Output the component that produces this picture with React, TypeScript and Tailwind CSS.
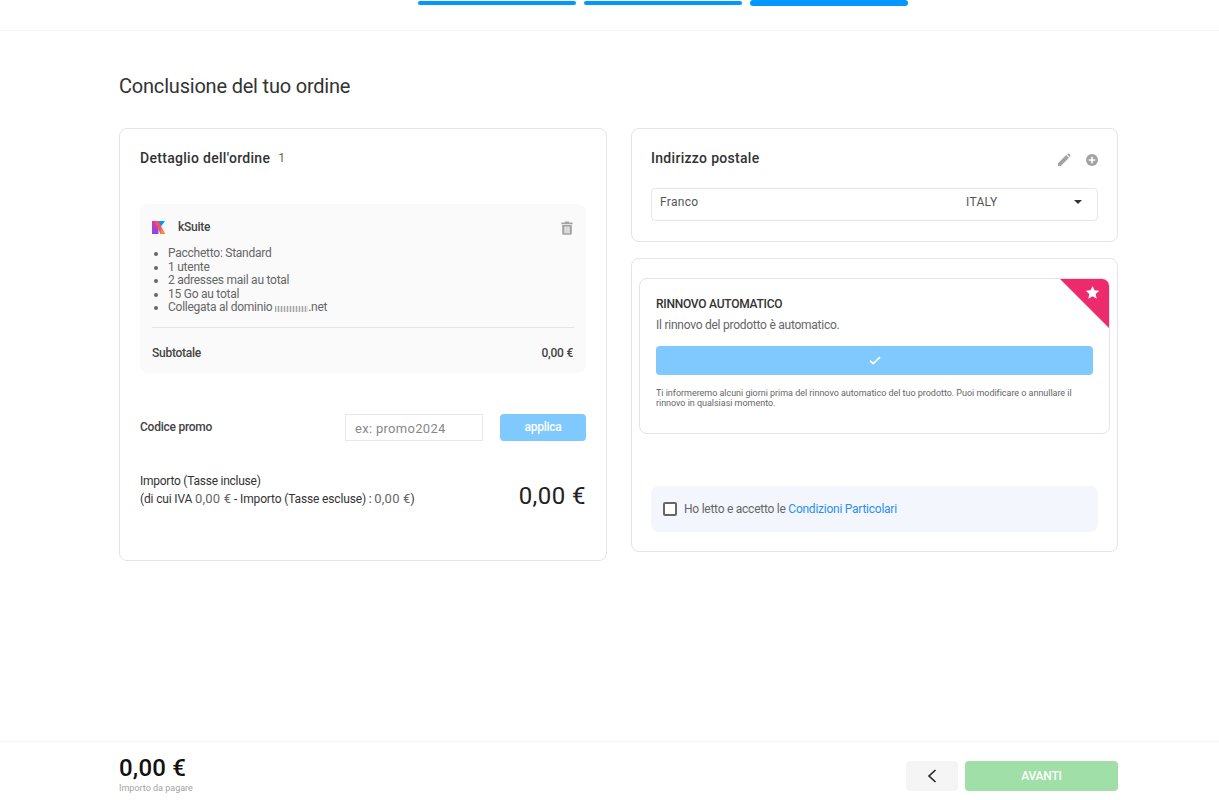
import React from "react";

const font = "font-['Roboto','Liberation_Sans',sans-serif]";

function KLogo() {
  return (
    <svg width="13" height="13" viewBox="0 0 13 13" className="shrink-0">
      <defs>
        <linearGradient id="kl" x1="0" y1="0" x2="0" y2="1">
          <stop offset="0" stopColor="#e0399b" />
          <stop offset="1" stopColor="#7a4cf0" />
        </linearGradient>
      </defs>
      <rect x="0" y="0" width="6.5" height="13" fill="url(#kl)" />
      <path d="M6 0H13L9 5.5 6 3z" fill="#0098ff" />
      <path d="M2.5 0H6.5L13 13H8.5z" fill="#f2555e" />
      <path d="M8.6 6.2L13 13H9z" fill="#fa8a3c" />
    </svg>
  );
}

function Trash() {
  return (
    <svg width="12" height="14" viewBox="0 0 12 14" fill="#a3a3a3">
      <path d="M4 0.5H8V1.6H11.6V3.2H0.4V1.6H4z" />
      <path fillRule="evenodd" d="M1.2 4H10.8V12.6C10.8 13.3 10.3 13.8 9.6 13.8H2.4C1.7 13.8 1.2 13.3 1.2 12.6zM3.5 5.6V12.2H4.7V5.6zM5.4 5.6V12.2H6.6V5.6zM7.3 5.6V12.2H8.5V5.6z" />
    </svg>
  );
}

function Pencil() {
  return (
    <svg width="14" height="14" viewBox="0 0 14 14" fill="#a3a3a3">
      <path d="M1 10.2L9.2 2 12 4.8 3.8 13H1z" />
      <path d="M10 1.2L10.8 0.6C11.2 0.3 11.7 0.3 12 0.6L13.4 2C13.7 2.3 13.7 2.8 13.4 3.2L12.8 4z" />
    </svg>
  );
}

function PlusCircle() {
  return (
    <svg width="12" height="12" viewBox="0 0 12 12">
      <circle cx="6" cy="6" r="6" fill="#a3a3a3" />
      <path d="M6 2.8V9.2M2.8 6H9.2" stroke="#fff" strokeWidth="1.6" />
    </svg>
  );
}

export default function App() {
  return (
    <div className={`${font} h-[800px] w-full bg-white flex flex-col overflow-hidden text-[#333]`}>
      <header className="h-[31px] shrink-0 border-b border-[#f5f5fa] flex justify-center gap-2 items-start pl-[107px]">
        <div className="w-[158px] h-[4px] mt-[1px] rounded-full bg-[#0098ff]" />
        <div className="w-[158px] h-[4px] mt-[1px] rounded-full bg-[#0098ff]" />
        <div className="w-[158px] h-[6px] rounded-full bg-[#0098ff]" />
      </header>

      <main className="flex-1 pl-[119px] pr-[101px]">
        <h1 className="mt-[41px] h-[28px] leading-[28px] text-[20px] tracking-[-0.2px] text-[#333]">Conclusione del tuo ordine</h1>
        <div className="mt-[28px] flex gap-[24px] items-start">
          <section className="w-[488px] h-[433px] shrink-0 rounded-lg border border-[#e4e4e4] bg-white px-[20px]">
            <div className="mt-[19px] h-[20px] flex items-center text-[14px] font-medium tracking-[0.3px] text-[#333]">
              Dettaglio dell'ordine
              <span className="ml-[8px] text-[12px] font-normal text-[#5c6b5c]">1</span>
            </div>
            <div className="mt-[36px] h-[169px] rounded-lg bg-[#fafafa] px-[12px] pt-[15px]">
              <div className="h-[16px] flex items-center justify-between">
                <div className="flex items-center">
                  <KLogo />
                  <span className="ml-[13px] text-[12px] tracking-[-0.25px] font-medium text-[#444]">kSuite</span>
                </div>
                <div className="mr-[1px] mt-[1px]">
                  <Trash />
                </div>
              </div>
              <ul className="mt-[12px] ml-[16px] list-disc text-[12px] tracking-[-0.25px] leading-[13.6px] text-[#666] marker:text-[#666]">
                <li>Pacchetto: Standard</li>
                <li>1 utente</li>
                <li>2 adresses mail au total</li>
                <li>15 Go au total</li>
                <li>
                  Collegata al dominio{" "}
                  <span className="inline-block align-[-1px] w-[33px] h-[6px] opacity-50 blur-[0.5px] bg-[repeating-linear-gradient(90deg,#555_0_1.5px,#ccc_1.5px_3px)]" />
                  .net
                </li>
              </ul>
              <div className="mt-[12px] border-t border-[#e4e4e4]" />
              <div className="mt-[16px] flex justify-between text-[12px] tracking-[-0.25px] font-medium text-[#444]">
                <span>Subtotale</span>
                <span className="mr-[1px]">0,00 €</span>
              </div>
            </div>
            <div className="mt-[41px] flex items-center">
              <span className="text-[12px] tracking-[-0.25px] font-medium text-[#444] -mt-[2px]">Codice promo</span>
              <div className="ml-auto w-[138px] h-[27px] border border-[#e8e8e8] px-[9px] text-[13px] leading-[27px] tracking-[0.3px] text-[#888]">
                ex: promo2024
              </div>
              <button className="ml-[17px] w-[86px] h-[27px] pb-[2px] rounded-sm bg-[#80c9ff] text-white text-[12px] tracking-[-0.25px] font-medium">
                applica
              </button>
            </div>
            <div className="mt-[32px] flex items-start justify-between">
              <div className="text-[12px] tracking-[-0.25px] leading-[17px] text-[#333]">
                <div>Importo (Tasse incluse)</div>
                <div className="tracking-[-0.15px]">
                  (di cui IVA <span className="text-[13px] tracking-[0.2px] text-[#666]">0,00 €</span> - Importo (Tasse escluse) :{" "}
                  <span className="text-[13px] tracking-[0.2px] text-[#666]">0,00 €</span>)
                </div>
              </div>
              <div className="text-[24px] leading-[28px] text-[#222] tracking-[0.45px] mt-[9px]">0,00 €</div>
            </div>
          </section>

          <div className="flex-1 flex flex-col gap-[16px]">
            <section className="h-[114px] rounded-lg border border-[#e4e4e4] px-[19px]">
              <div className="mt-[19px] h-[20px] flex items-center justify-between">
                <span className="text-[14px] font-medium tracking-[0.3px] text-[#333]">Indirizzo postale</span>
                <div className="flex items-center gap-[15px] mt-[4px]">
                  <Pencil />
                  <PlusCircle />
                </div>
              </div>
              <div className="mt-[20px] h-[33px] rounded-[4px] border border-[#e6e6e6] flex items-start pl-[8px] pr-[15px] pt-[4px] text-[12px] tracking-[0.3px] text-[#555]">
                <span className="w-[306px]">Franco</span>
                <span>ITALY</span>
                <span className="ml-auto mt-[7px] w-0 h-0 border-x-[4px] border-x-transparent border-t-[4px] border-t-[#333]" />
              </div>
            </section>

            <section className="h-[294px] rounded-lg border border-[#e4e4e4] px-[7px] pt-[19px]">
              <div className="relative h-[156px] rounded-lg border border-[#e4e4e4] px-[16px] overflow-hidden">
                <div className="absolute top-0 right-0 w-0 h-0 border-t-[49px] border-t-[#ec2a6c] border-l-[49px] border-l-transparent" />
                <svg className="absolute top-[6px] right-[9px]" width="15" height="15" viewBox="0 0 24 24" fill="#fff">
                  <path d="M12 1.5l3.2 7 7.6.8-5.7 5.1 1.6 7.5L12 18.1l-6.7 3.8 1.6-7.5L1.2 9.3l7.6-.8z" />
                </svg>
                <div className="mt-[18px] text-[12px] tracking-[-0.25px] leading-[14px] font-medium text-[#333]">RINNOVO AUTOMATICO</div>
                <div className="mt-[7px] text-[12px] tracking-[-0.25px] leading-[14px] text-[#666]">Il rinnovo del prodotto è automatico.</div>
                <div className="mt-[14px] h-[29px] rounded-sm bg-[#80c9ff] flex items-center justify-center">
                  <svg width="12" height="9" viewBox="0 0 12 9" fill="none" stroke="#fff" strokeWidth="1.6">
                    <path d="M1 4.6L4.2 7.6 11 1.2" />
                  </svg>
                </div>
                <p className="mt-[13px] text-[9px] tracking-[-0.03px] leading-[10px] text-[#666]">
                  Ti informeremo alcuni giorni prima del rinnovo automatico del tuo prodotto. Puoi modificare o annullare il rinnovo in qualsiasi momento.
                </p>
              </div>
              <div className="mt-[52px] mx-[12px] h-[46px] rounded-lg bg-[#f3f6fd] flex items-center pl-[12px] text-[12px] tracking-[-0.25px] text-[#666]">
                <span className="w-[14px] h-[14px] rounded-[2px] border-2 border-[#666] bg-white mr-[7px]" />
                <span>
                  Ho letto e accetto le <span className="text-[#2b8ff0]">Condizioni Particolari</span>
                </span>
              </div>
            </section>
          </div>
        </div>
      </main>

      <footer className="h-[59px] shrink-0 border-t border-[#f5f5fa] pr-[101px] pl-[119px] flex items-start justify-between">
        <div className="mt-[12px]">
          <div className="text-[24px] leading-[29px] tracking-[0.2px] font-medium text-[#111]">0,00 €</div>
          <div className="text-[9px] leading-[10px] text-[#a3a3a3]">Importo da pagare</div>
        </div>
        <div className="mt-[19px] flex gap-[7px]">
          <button className="w-[52px] h-[30px] rounded-sm bg-[#f5f5f5] flex items-center justify-center">
            <svg width="10" height="14" viewBox="0 0 10 14" fill="none" stroke="#222" strokeWidth="1.6">
              <path d="M8.5 1L2 7l6.5 6" />
            </svg>
          </button>
          <button className="w-[153px] h-[30px] rounded-sm bg-[#a0dfa7] text-white text-[12px] tracking-[-0.2px] font-medium">AVANTI</button>
        </div>
      </footer>
    </div>
  );
}
